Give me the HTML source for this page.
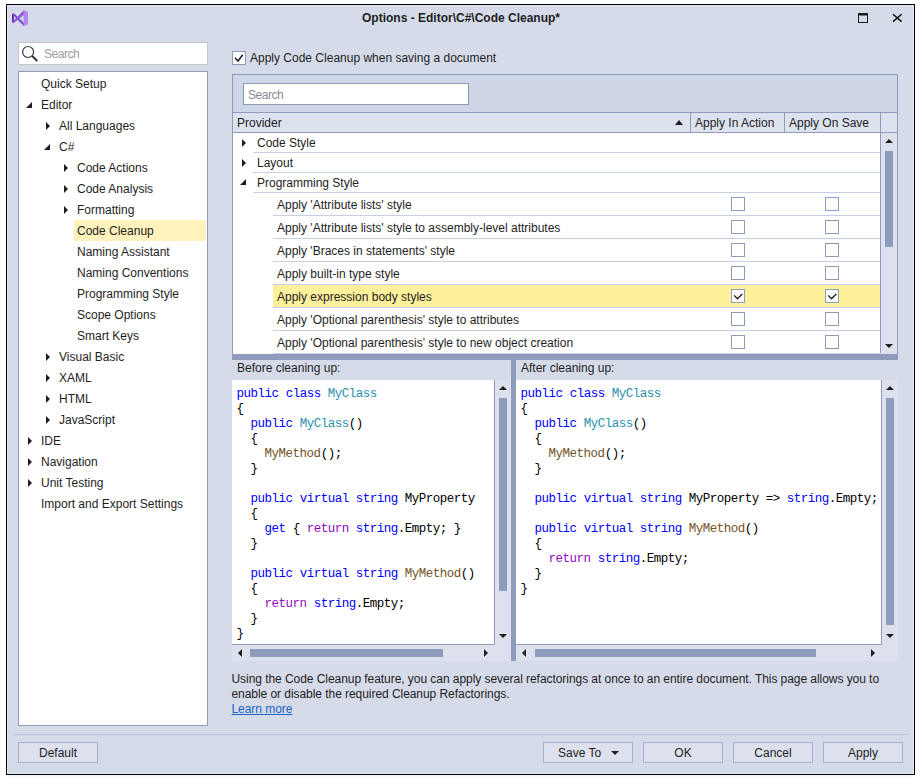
<!DOCTYPE html>
<html><head><meta charset="utf-8">
<style>
*{box-sizing:border-box;margin:0;padding:0}
html,body{width:921px;height:783px;overflow:hidden;background:#fff}
body{position:relative;font-family:"Liberation Sans",sans-serif;font-size:12px;color:#1e1e1e}
.a{position:absolute}
#win{position:absolute;left:6px;top:4px;width:909px;height:771px;border:1px solid #000;background:#d6dbe9;box-shadow:inset 0 0 0 1px #e4e8f4,0 1px 3px rgba(0,0,0,0.06)}
.t{position:absolute;white-space:nowrap;line-height:21px;height:21px}
.tri-r{position:absolute;width:0;height:0;border-top:4px solid transparent;border-bottom:4px solid transparent;border-left:4px solid #1e1e1e}
.tri-d{position:absolute;width:0;height:0;border-left:6px solid transparent;border-bottom:6px solid #1e1e1e}
.row{position:absolute;border-bottom:1px solid #c9cfe2;white-space:nowrap}
.cb{position:absolute;width:14px;height:14px;border:1px solid #8e9bbc;background:#fff}
.code{position:absolute;font-family:"Liberation Mono",monospace;font-size:12.5px;letter-spacing:-0.5px;line-height:15px;white-space:pre;color:#000}
.k{color:#0000ff}.c{color:#2b91af}.m{color:#74531f}.r{color:#8f08c4}
.btn{position:absolute;top:742px;height:21px;border:1px solid #a5afcc;background:#dde1ee;text-align:center;line-height:21px}
.sbv{position:absolute;background:#dde1ee}
.thumb{position:absolute;background:#8e9bbc}
.up{position:absolute;width:0;height:0;border-left:4px solid transparent;border-right:4px solid transparent;border-bottom:4px solid #1e1e1e}
.dn{position:absolute;width:0;height:0;border-left:4px solid transparent;border-right:4px solid transparent;border-top:4px solid #1e1e1e}
.lf{position:absolute;width:0;height:0;border-top:4px solid transparent;border-bottom:4px solid transparent;border-right:4px solid #1e1e1e}
.rt{position:absolute;width:0;height:0;border-top:4px solid transparent;border-bottom:4px solid transparent;border-left:4px solid #1e1e1e}
</style></head><body>
<div id="win"></div>

<!-- title bar -->
<svg class="a" style="left:8px;top:6px" width="24" height="24" viewBox="0 0 24 24">
  <path d="M4 8 L6 7.2 L16 17 L16 20.2 Z" fill="#7b48c9"/>
  <path d="M4 8 L4 16.2 L5.9 17 L5.9 9.5 Z" fill="#5e2aa8"/>
  <path d="M4 16.2 L16 4 L16 8.8 L5.9 17 Z" fill="#8c5bd9"/>
  <path d="M15.6 4 L20 6 L20 18.2 L15.6 20.2 Z" fill="#b386f1"/>
</svg>
<div class="a" style="left:362px;top:10px;line-height:17px;font-weight:bold;white-space:nowrap">Options - Editor\C#\Code Cleanup*</div>
<svg class="a" style="left:858px;top:13px" width="11" height="10"><rect x="0.5" y="0.5" width="9" height="9" fill="none" stroke="#1e1e1e"/><rect x="0" y="0" width="10" height="2.5" fill="#1e1e1e"/></svg>
<svg class="a" style="left:892px;top:13px" width="11" height="10"><path d="M1 1.3 L9.6 8.6 M9.6 1.3 L1 8.6" stroke="#111" stroke-width="1.45"/></svg>

<!-- left search -->
<div class="a" style="left:18px;top:42px;width:190px;height:23px;border:1px solid #c6c6c6;background:#fff"></div>
<svg class="a" style="left:21px;top:45px" width="18" height="18"><circle cx="7.1" cy="7" r="5.5" fill="none" stroke="#333" stroke-width="1.2"/><path d="M11.2 11 L16.2 16" stroke="#333" stroke-width="1.9"/></svg>
<div class="a" style="left:44px;top:45px;line-height:19px;color:#a09a9e;letter-spacing:-0.45px">Search</div>

<!-- tree -->
<div class="a" style="left:18px;top:71px;width:190px;height:655px;border:1px solid #8e9bbc;background:#fff"></div>
<div class="a" style="left:74px;top:220px;width:132px;height:21px;background:#fff2bd"></div>
<div id="tree">
<div class="t" style="left:41px;top:74px">Quick Setup</div>
<div class="tri-d" style="left:26px;top:102px"></div><div class="t" style="left:41px;top:95px">Editor</div>
<div class="tri-r" style="left:46px;top:122px"></div><div class="t" style="left:59px;top:116px">All Languages</div>
<div class="tri-d" style="left:44px;top:144px"></div><div class="t" style="left:59px;top:137px">C#</div>
<div class="tri-r" style="left:64px;top:164px"></div><div class="t" style="left:77px;top:158px">Code Actions</div>
<div class="tri-r" style="left:64px;top:185px"></div><div class="t" style="left:77px;top:179px">Code Analysis</div>
<div class="tri-r" style="left:64px;top:206px"></div><div class="t" style="left:77px;top:200px">Formatting</div>
<div class="t" style="left:77px;top:221px">Code Cleanup</div>
<div class="t" style="left:77px;top:242px">Naming Assistant</div>
<div class="t" style="left:77px;top:263px">Naming Conventions</div>
<div class="t" style="left:77px;top:284px">Programming Style</div>
<div class="t" style="left:77px;top:305px">Scope Options</div>
<div class="t" style="left:77px;top:326px">Smart Keys</div>
<div class="tri-r" style="left:46px;top:353px"></div><div class="t" style="left:59px;top:347px">Visual Basic</div>
<div class="tri-r" style="left:46px;top:374px"></div><div class="t" style="left:59px;top:368px">XAML</div>
<div class="tri-r" style="left:46px;top:395px"></div><div class="t" style="left:59px;top:389px">HTML</div>
<div class="tri-r" style="left:46px;top:416px"></div><div class="t" style="left:59px;top:410px">JavaScript</div>
<div class="tri-r" style="left:28px;top:437px"></div><div class="t" style="left:41px;top:431px">IDE</div>
<div class="tri-r" style="left:28px;top:458px"></div><div class="t" style="left:41px;top:452px">Navigation</div>
<div class="tri-r" style="left:28px;top:479px"></div><div class="t" style="left:41px;top:473px">Unit Testing</div>
<div class="t" style="left:41px;top:494px">Import and Export Settings</div>
</div>

<!-- apply checkbox -->
<div class="cb" style="left:232px;top:51px"></div>
<svg class="a" style="left:234px;top:53px" width="10" height="10"><path d="M1 4.8 L4 8 L8.8 1.8" fill="none" stroke="#1e1e1e" stroke-width="1.5"/></svg>
<div class="a" style="left:250px;top:49px;line-height:19px;white-space:nowrap">Apply Code Cleanup when saving a document</div>

<!-- grid -->
<div class="a" style="left:232px;top:74px;width:666px;height:280px;border:1px solid #8e9bbc;border-bottom:none;background:#cfd6e8"></div>
<div class="a" style="left:243px;top:83px;width:226px;height:22px;border:1px solid #8e9bbc;background:#fff"></div>
<div class="a" style="left:248px;top:86px;line-height:18px;color:#8d8a92;letter-spacing:-0.45px">Search</div>
<!-- header -->
<div class="a" style="left:233px;top:112px;width:664px;height:21px;border-top:1px solid #8e9bbc;border-bottom:1px solid #8e9bbc;background:#dde2ef"></div>
<div class="a" style="left:690px;top:112px;width:1px;height:21px;background:#8e9bbc"></div>
<div class="a" style="left:784px;top:112px;width:1px;height:21px;background:#8e9bbc"></div>
<div class="a" style="left:880px;top:112px;width:1px;height:241px;background:#8e9bbc"></div>
<div class="a" style="left:237px;top:114px;line-height:19px">Provider</div>
<div class="up" style="left:675px;top:120px;border-bottom-width:5px"></div>
<div class="a" style="left:695px;top:114px;line-height:19px">Apply In Action</div>
<div class="a" style="left:789px;top:114px;line-height:19px">Apply On Save</div>
<!-- body -->
<div class="a" style="left:233px;top:133px;width:647px;height:221px;background:#fff"></div>
<div class="a" style="left:273px;top:284px;width:607px;height:23px;background:#fff09c"></div>
<div id="grows">
<div class="row" style="left:253px;top:133px;width:627px;height:20px"></div>
<div class="tri-r" style="left:242px;top:139px"></div><div class="t" style="left:257px;top:134px;line-height:19px">Code Style</div>
<div class="row" style="left:253px;top:153px;width:627px;height:20px"></div>
<div class="tri-r" style="left:242px;top:159px"></div><div class="t" style="left:257px;top:154px;line-height:19px">Layout</div>
<div class="row" style="left:253px;top:173px;width:627px;height:20px"></div>
<div class="tri-d" style="left:240px;top:179px"></div><div class="t" style="left:257px;top:174px;line-height:19px">Programming Style</div>
</div>
<div id="crows">
<div class="row" style="left:273px;top:193px;width:607px;height:23px"></div>
<div class="t" style="left:277px;top:194px;line-height:22px;height:22px">Apply 'Attribute lists' style</div>
<div class="cb" style="left:731px;top:197px"></div>
<div class="cb" style="left:825px;top:197px"></div>
<div class="row" style="left:273px;top:216px;width:607px;height:23px"></div>
<div class="t" style="left:277px;top:217px;line-height:22px;height:22px">Apply 'Attribute lists' style to assembly-level attributes</div>
<div class="cb" style="left:731px;top:220px"></div>
<div class="cb" style="left:825px;top:220px"></div>
<div class="row" style="left:273px;top:239px;width:607px;height:23px"></div>
<div class="t" style="left:277px;top:240px;line-height:22px;height:22px">Apply 'Braces in statements' style</div>
<div class="cb" style="left:731px;top:243px"></div>
<div class="cb" style="left:825px;top:243px"></div>
<div class="row" style="left:273px;top:262px;width:607px;height:23px"></div>
<div class="t" style="left:277px;top:263px;line-height:22px;height:22px">Apply built-in type style</div>
<div class="cb" style="left:731px;top:266px"></div>
<div class="cb" style="left:825px;top:266px"></div>
<div class="row" style="left:273px;top:285px;width:607px;height:23px"></div>
<div class="t" style="left:277px;top:286px;line-height:22px;height:22px">Apply expression body styles</div>
<div class="cb" style="left:731px;top:289px"></div>
<svg class="a" style="left:733px;top:291px" width="10" height="10"><path d="M1.2 4.4 L4.4 7.7 L9.3 2.9" fill="none" stroke="#1e1e1e" stroke-width="1.35"/></svg>
<div class="cb" style="left:825px;top:289px"></div>
<svg class="a" style="left:827px;top:291px" width="10" height="10"><path d="M1.2 4.4 L4.4 7.7 L9.3 2.9" fill="none" stroke="#1e1e1e" stroke-width="1.35"/></svg>
<div class="row" style="left:273px;top:308px;width:607px;height:23px"></div>
<div class="t" style="left:277px;top:309px;line-height:22px;height:22px">Apply 'Optional parenthesis' style to attributes</div>
<div class="cb" style="left:731px;top:312px"></div>
<div class="cb" style="left:825px;top:312px"></div>
<div class="row" style="left:273px;top:331px;width:607px;height:23px"></div>
<div class="t" style="left:277px;top:332px;line-height:22px;height:22px">Apply 'Optional parenthesis' style to new object creation</div>
<div class="cb" style="left:731px;top:335px"></div>
<div class="cb" style="left:825px;top:335px"></div>
</div>
<!-- grid scrollbar -->
<div class="sbv" style="left:881px;top:133px;width:16px;height:221px"></div>
<div class="up" style="left:885px;top:139px"></div>
<div class="thumb" style="left:885px;top:151px;width:8px;height:96px"></div>
<div class="dn" style="left:885px;top:344px"></div>
<!-- splitter bar -->
<div class="a" style="left:232px;top:354px;width:666px;height:6px;background:#8e9bbc"></div>

<!-- before pane -->
<div class="a" style="left:237px;top:359px;line-height:19px;white-space:nowrap">Before cleaning up:</div>
<div class="a" style="left:232px;top:380px;width:263px;height:265px;background:#fff;border-right:1px solid #8e9bbc;border-bottom:1px solid #8e9bbc"></div>
<div class="sbv" style="left:495px;top:380px;width:16px;height:265px"></div>
<div class="up" style="left:499px;top:386px"></div>
<div class="thumb" style="left:499px;top:398px;width:8px;height:193px"></div>
<div class="dn" style="left:499px;top:634px"></div>
<div class="sbv" style="left:232px;top:645px;width:279px;height:16px"></div>
<div class="lf" style="left:238px;top:649px"></div>
<div class="thumb" style="left:250px;top:649px;width:193px;height:8px"></div>
<div class="rt" style="left:484px;top:649px"></div>
<div class="code" style="left:236.6px;top:387px"><span class="k">public</span> <span class="k">class</span> <span class="c">MyClass</span>
{
  <span class="k">public</span> <span class="c">MyClass</span>()
  {
    <span class="m">MyMethod</span>();
  }

  <span class="k">public</span> <span class="k">virtual</span> <span class="k">string</span> MyProperty
  {
    <span class="k">get</span> { <span class="r">return</span> <span class="k">string</span>.Empty; }
  }

  <span class="k">public</span> <span class="k">virtual</span> <span class="k">string</span> <span class="m">MyMethod</span>()
  {
    <span class="r">return</span> <span class="k">string</span>.Empty;
  }
}</div>

<!-- vertical splitter -->
<div class="a" style="left:511px;top:360px;width:5px;height:301px;background:#8e9bbc"></div>

<!-- after pane -->
<div class="a" style="left:521px;top:359px;line-height:19px;white-space:nowrap">After cleaning up:</div>
<div class="a" style="left:516px;top:380px;width:366px;height:265px;background:#fff;border-right:1px solid #8e9bbc;border-bottom:1px solid #8e9bbc"></div>
<div class="sbv" style="left:882px;top:380px;width:16px;height:265px"></div>
<div class="up" style="left:886px;top:386px"></div>
<div class="thumb" style="left:886px;top:398px;width:8px;height:227px"></div>
<div class="dn" style="left:886px;top:634px"></div>
<div class="sbv" style="left:516px;top:645px;width:382px;height:16px"></div>
<div class="lf" style="left:522px;top:649px"></div>
<div class="thumb" style="left:535px;top:649px;width:281px;height:8px"></div>
<div class="rt" style="left:871px;top:649px"></div>
<div class="code" style="left:520.6px;top:387px"><span class="k">public</span> <span class="k">class</span> <span class="c">MyClass</span>
{
  <span class="k">public</span> <span class="c">MyClass</span>()
  {
    <span class="m">MyMethod</span>();
  }

  <span class="k">public</span> <span class="k">virtual</span> <span class="k">string</span> MyProperty =&gt; <span class="k">string</span>.Empty;

  <span class="k">public</span> <span class="k">virtual</span> <span class="k">string</span> <span class="m">MyMethod</span>()
  {
    <span class="r">return</span> <span class="k">string</span>.Empty;
  }
}</div>

<!-- description -->
<div class="a" style="left:231.5px;top:672px;line-height:15px;white-space:nowrap;letter-spacing:-0.055px">Using the Code Cleanup feature, you can apply several refactorings at once to an entire document. This page allows you to<br>enable or disable the required Cleanup Refactorings.<br><span style="color:#1a62c6;text-decoration:underline">Learn more</span></div>

<!-- bottom -->
<div class="a" style="left:13px;top:734px;width:896px;height:1px;background:#b9c1d9"></div>
<div class="btn" style="left:18px;width:80px">Default</div>
<div class="btn" style="left:543px;width:90px;text-align:left;padding-left:14px">Save To</div>
<div class="dn" style="left:611px;top:751px"></div>
<div class="btn" style="left:643px;width:80px">OK</div>
<div class="btn" style="left:733px;width:80px">Cancel</div>
<div class="btn" style="left:823px;width:80px">Apply</div>

<script>
</script>
</body></html>
